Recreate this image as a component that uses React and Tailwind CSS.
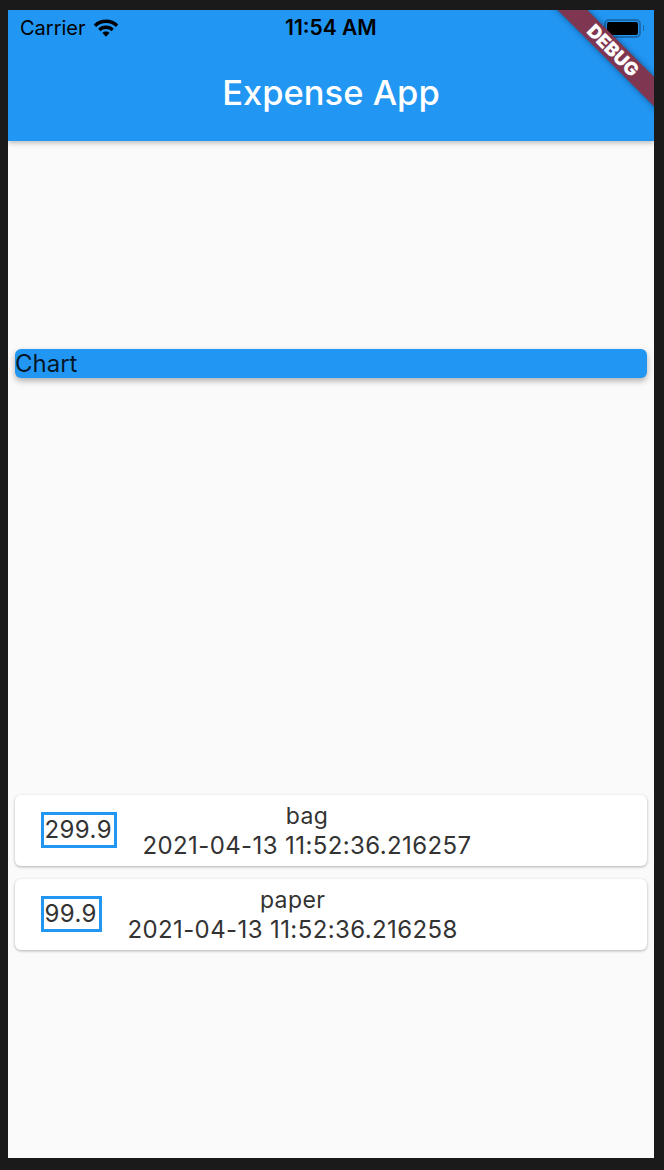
import React from "react";

const font = { fontFamily: "Inter, sans-serif" };

const transactions = [
  { id: 1, amount: "299.9", title: "bag", date: "2021-04-13 11:52:36.216257" },
  { id: 2, amount: "99.9", title: "paper", date: "2021-04-13 11:52:36.216258" },
];

const WifiIcon = () => (
  <svg width="26" height="19" viewBox="0 0 26 19" className="block">
    <path d="M13 0.5C8.2 0.5 3.9 2.4 0.8 5.4L3.1 7.9C5.7 5.4 9.2 3.9 13 3.9C16.8 3.9 20.3 5.4 22.9 7.9L25.2 5.4C22.1 2.4 17.8 0.5 13 0.5Z" fill="#000" />
    <path d="M13 6.6C10 6.6 7.2 7.8 5.2 9.8L7.5 12.2C8.9 10.8 10.9 10 13 10C15.1 10 17.1 10.8 18.5 12.2L20.8 9.8C18.8 7.8 16 6.6 13 6.6Z" fill="#000" />
    <path d="M13 12.6C11.6 12.6 10.4 13.1 9.5 14L13 17.8L16.5 14C15.6 13.1 14.4 12.6 13 12.6Z" fill="#000" />
  </svg>
);

const Battery = () => (
  <div className="flex items-center gap-[2px]">
    <div className="w-[37px] h-[19px] rounded-[5px] border-2 border-[#1a6bb0] p-[1px]">
      <div className="w-full h-full rounded-[2px] bg-black"></div>
    </div>
    <div className="w-[1px] h-[6px] bg-[#1a6bb0]"></div>
  </div>
);

const TransactionCard = ({ tx }) => (
  <div className="flex items-start h-[71px] mb-[13px] pl-[26px] pt-[17px] bg-white rounded-[6px] shadow-[0_1px_3px_rgba(0,0,0,0.3)]">
    <div className="border-[3px] border-[#2196f3] h-[36px] pl-[0.5px] pr-[2.5px] pb-[1px] flex items-center text-[24px] leading-none tracking-[0.4px] text-[#333333]">
      {tx.amount}
    </div>
    <div className="ml-[25px] -mt-[11px] flex flex-col items-center text-[#333333] text-[24px] leading-[30px] tracking-[0.4px]">
      <span className="text-[23px]">{tx.title}</span>
      <span>{tx.date}</span>
    </div>
  </div>
);

const App = () => {
  return (
    <div className="w-[664px] h-[1170px] bg-[#1a1a1a] pt-[10px] pl-[8px] overflow-hidden" style={font}>
      <div className="relative w-[646px] h-[1148px] bg-[#fafafa] overflow-hidden">
        {/* App bar */}
        <div className="h-[131px] bg-[#2196f3] shadow-[0_2px_5px_rgba(0,0,0,0.25)]">
          <div className="relative flex items-center justify-between h-[36px] pl-[12px] pr-[10px] text-black">
            <div className="flex items-center gap-[7px] text-[20px]">
              <span>Carrier</span>
              <WifiIcon />
            </div>
            <span className="absolute left-[277px] text-[21px] font-semibold">11:54 AM</span>
            <Battery />
          </div>
          <h1 className="mt-[27px] text-center text-white text-[34.5px] font-medium leading-[40px]">
            Expense App
          </h1>
        </div>

        {/* Body */}
        <div className="px-[7px]">
          <div className="mt-[208px] h-[29px] bg-[#2196f3] rounded-[6px] shadow-[0_3px_6px_rgba(0,0,0,0.3)] flex items-center text-[24px] text-black/85">
            Chart
          </div>
          <div className="mt-[417px]">
            {transactions.map((tx) => (
              <TransactionCard key={tx.id} tx={tx} />
            ))}
          </div>
        </div>

        {/* Debug banner */}
        <div className="absolute top-[29.5px] left-[524.5px] w-[160px] h-[21px] rotate-45 bg-[#7f3650] shadow-[0_0_6px_rgba(0,0,0,0.4)] flex items-center justify-center text-white text-[18.5px] font-black">
          DEBUG
        </div>
      </div>
    </div>
  );
};

export default App;
